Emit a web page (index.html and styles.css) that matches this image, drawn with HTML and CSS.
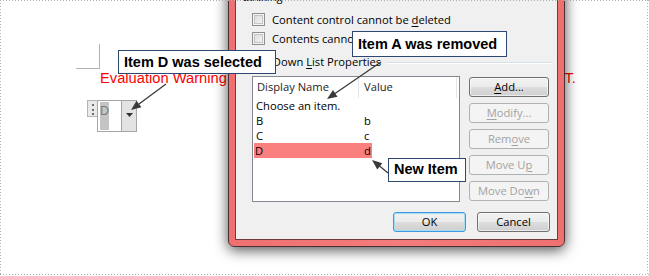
FILE: index.html
```html
<!DOCTYPE html>
<html>
<head>
<meta charset="utf-8">
<link rel="stylesheet" href="styles.css">
</head>
<body>
<div class="canvas">
  <div class="doc">
    <div class="corner"></div>
    <p class="warning">Evaluation Warning : The document was created with Spire.Doc for .NET.</p>
    <div class="cc">
      <div class="cc-handle"><i></i><i></i><i></i></div>
      <div class="cc-box">
        <span class="cc-val">D</span>
        <span class="cc-btn"><svg width="7" height="4" viewBox="0 0 7 4"><path d="M0 0H7L3.5 4Z" fill="#333"/></svg></span>
      </div>
    </div>
  </div>

  <div class="dialog">
    <div class="dlg-body">
      <div class="group-label"><span>Locking</span></div>
      <div class="chk"><span class="box"></span><span>Content control cannot be <u>d</u>eleted</span></div>
      <div class="chk"><span class="box"></span><span>Contents cannot be <u>e</u>dited</span></div>
      <div class="group-label gl2"><span>Drop-Down <u>L</u>ist Properties</span></div>
      <div class="list-area">
        <div class="listbox">
          <div class="lb-head"><span class="h1">Display Name</span><span class="h2">Value</span></div>
          <div class="lb-row"><span>Choose an item.</span><span></span></div>
          <div class="lb-row"><span>B</span><span>b</span></div>
          <div class="lb-row"><span>C</span><span>c</span></div>
          <div class="lb-row sel"><span>D</span><span>d</span></div>
        </div>
        <div class="btns">
          <div class="btn"><u>A</u>dd...</div>
          <div class="btn off"><u>M</u>odify...</div>
          <div class="btn off">Rem<u>o</u>ve</div>
          <div class="btn off">Move U<u>p</u></div>
          <div class="btn off">Move Do<u>w</u>n</div>
        </div>
      </div>
      <div class="footer">
        <div class="btn ok">OK</div>
        <div class="btn cancel">Cancel</div>
      </div>
    </div>
  </div>

  <div class="callout c1">Item D was selected</div>
  <div class="callout c2">Item A was removed</div>
  <div class="callout c3">New Item</div>

  <svg class="arrows" width="649" height="276" viewBox="0 0 649 276">
    <g stroke="#3a3a3a" stroke-width="1.3" fill="none">
      <line x1="166" y1="84" x2="139" y2="104"/>
      <line x1="381" y1="62" x2="335" y2="93.5"/>
      <line x1="388" y1="173" x2="379.5" y2="166"/>
    </g>
    <g fill="#3a3a3a">
      <polygon points="131,110 141.4,107.2 136.6,100.8"/>
      <polygon points="327,99 337.5,96.7 333,90"/>
      <polygon points="372,160 382.3,163.2 377.3,169.4"/>
    </g>
  </svg>

  <div class="frame"></div>
</div>
</body>
</html>
```

FILE: styles.css
```css
* { box-sizing: border-box; }
html, body { margin: 0; padding: 0; background: #fff; }
body { width: 649px; height: 276px; overflow: hidden; }

.canvas {
  position: relative;
  width: 649px;
  height: 276px;
  overflow: hidden;
  background: #fff;
}

/* document */
.doc { display: flex; flex-direction: column; align-items: flex-start; }
.corner {
  margin: 44px 0 0 76px;
  width: 24px;
  height: 25px;
  border-right: 1px solid #b3b3b3;
  border-bottom: 1px solid #b3b3b3;
}
.warning {
  margin: 1px 0 0 100px;
  font: 14.7px/17px "Liberation Sans", Arial, sans-serif;
  color: #ff0000;
  white-space: nowrap;
}
.cc { margin: 13px 0 0 87px; display: flex; align-items: flex-start; }
.cc-handle {
  width: 10px;
  height: 17px;
  border: 1px solid #b5b5b5;
  border-right: none;
  background: #e9e9e9;
  display: flex;
  flex-direction: column;
  align-items: center;
  gap: 2.5px;
  padding-top: 3px;
}
.cc-handle i { display: block; width: 2px; height: 2px; background: #6d6d6d; }
.cc-box {
  width: 40px;
  height: 32px;
  border: 1px solid #a6a6a6;
  display: flex;
  background: #fff;
}
.cc-val {
  margin: 1px 0 1px 2px;
  width: 9px;
  background: #c4c4c4;
  color: #7b7b7b;
  font: 12.5px/16px "Liberation Sans", Arial, sans-serif;
  padding-top: 1px;
}
.cc-btn {
  margin-left: auto;
  width: 15px;
  border-left: 1px solid #a6a6a6;
  background: #e3e3e3;
  display: flex;
  align-items: flex-end;
  justify-content: center;
  padding-bottom: 14px;
}

/* dialog */
.dialog {
  position: absolute;
  left: 228px;
  top: -20px;
  width: 337px;
  height: 267px;
  border: 1px solid #4a3030;
  border-radius: 0 0 6px 6px;
  background: linear-gradient(90deg, #ee7070, #f47c7c 50%, #ee7070);
  padding: 6px 6px 6px;
  box-shadow: 0 3px 14px rgba(0, 0, 0, .7);
  z-index: 2;
}
.dlg-body {
  height: 100%;
  border: 1px solid #6e3c3c;
  background: #f0f0f0;
  display: flex;
  flex-direction: column;
  font: 11.2px "Open Sans", "Noto Sans", sans-serif;
  color: #000;
}
.dlg-body u { text-decoration: underline; text-underline-offset: 2px; }
.group-label {
  margin-top: 1px;
  height: 16px;
  line-height: 16px;
  padding-left: 7px;
  display: flex;
  align-items: center;
  white-space: nowrap;
}
.group-label::after {
  content: "";
  flex: 1;
  height: 1px;
  margin: 1px 4px 0 5px;
  background: #d5dfe5;
  box-shadow: 0 1px 0 #fff;
}
.gl2 { margin-top: 6px; }
.chk {
  height: 19px;
  display: flex;
  align-items: center;
  gap: 7px;
  padding-left: 16px;
  white-space: nowrap;
}
.group-label + .chk { margin-top: 5px; }
.box {
  width: 13px;
  height: 13px;
  border: 1px solid #8e8f8f;
  background: linear-gradient(135deg, #d6d6d6, #fafafa);
  box-shadow: inset 0 0 0 1px #f4f4f4, inset 0 0 0 2px #c3c6c9;
  flex: none;
}

.list-area {
  margin-top: 6px;
  padding-left: 16px;
  display: flex;
  gap: 9px;
}
.listbox {
  width: 208px;
  height: 126px;
  border: 1px solid #828790;
  background: #fff;
}
.lb-head {
  height: 21px;
  display: grid;
  grid-template-columns: 106px 98px;
  line-height: 19px;
}
.lb-head span { color: #1e1e1e; }
.lb-head .h1 { padding-left: 4px; border-right: 1px solid #e3e5e8; }
.lb-head .h2 { padding-left: 5px; border-right: 1px solid #e3e5e8; }
.lb-row {
  height: 15px;
  line-height: 15px;
  display: grid;
  grid-template-columns: 106px 1fr;
}
.lb-row span:first-child { padding-left: 3px; }
.lb-row span:last-child { padding-left: 5px; }
.lb-row.sel {
  width: 118px;
  margin-left: 1px;
  background: #fa7f7f;
  grid-template-columns: 105px 1fr;
}
.lb-row.sel span:first-child { padding-left: 1px; }

.btns {
  margin-top: 1px;
  display: flex;
  flex-direction: column;
  gap: 6px;
}
.btn {
  width: 80px;
  height: 20px;
  line-height: 18px;
  text-align: center;
  border: 1px solid #707070;
  border-radius: 3px;
  background: linear-gradient(#f2f2f2, #ebebeb 50%, #dddddd 50%, #cfcfcf);
  box-shadow: inset 0 0 0 1px rgba(255, 255, 255, .6);
  color: #000;
}
.btn.off {
  border-color: #adb2b5;
  background: #f4f4f4;
  box-shadow: none;
  color: #a3a3a3;
}
.footer {
  margin-top: 10px;
  display: flex;
  justify-content: flex-end;
  gap: 11px;
  padding-right: 7px;
}
.footer .btn { width: 73px; }
.btn.ok {
  border-color: #3c9be0;
  box-shadow: inset 0 0 0 1px #a9dcf6;
}

/* callouts */
.callout {
  position: absolute;
  z-index: 5;
  background: #fff;
  border: 1px solid #2c4770;
  font: bold 14.5px "Liberation Sans", Arial, sans-serif;
  color: #000;
  padding-left: 5px;
  display: flex;
  align-items: center;
  white-space: nowrap;
}
.c1 { left: 118px; top: 50px; width: 158px; height: 24px; }
.c2 { left: 352px; top: 31px; width: 155px; height: 26px; }
.c3 { left: 388px; top: 158px; width: 78px; height: 24px; padding-bottom: 2px; }

.arrows { position: absolute; left: 0; top: 0; z-index: 6; }

.frame {
  position: absolute;
  inset: 0;
  z-index: 10;
  pointer-events: none;
  background:
    linear-gradient(to right, #b0b0b0 1px, transparent 1px) 0 0 / 3px 1px repeat-x,
    linear-gradient(to right, #b0b0b0 1px, transparent 1px) 0 274px / 3px 1px repeat-x,
    linear-gradient(to bottom, #b0b0b0 1px, transparent 1px) 0 0 / 1px 3px repeat-y,
    linear-gradient(to bottom, #b0b0b0 1px, transparent 1px) 647px 0 / 1px 3px repeat-y;
}
```
